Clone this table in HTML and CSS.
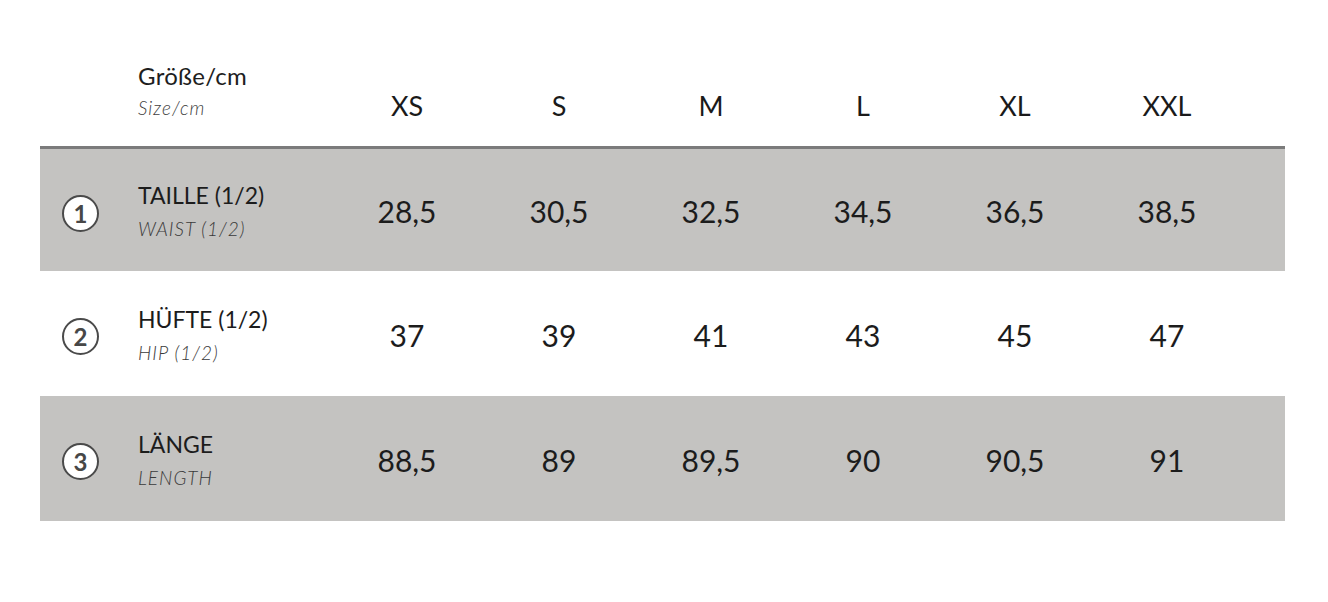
FILE: index.html
```html
<!DOCTYPE html>
<html lang="de">
<head>
<meta charset="utf-8">
<title>Größentabelle</title>
<link rel="stylesheet" href="styles.css">
</head>
<body>
<div class="chart">
  <div class="row head">
    <div class="icon-cell"></div>
    <div class="label">
      <div class="de">Größe/cm</div>
      <div class="en">Size/cm</div>
    </div>
    <div class="size">XS</div>
    <div class="size">S</div>
    <div class="size">M</div>
    <div class="size">L</div>
    <div class="size">XL</div>
    <div class="size">XXL</div>
  </div>
  <div class="row data shaded first">
    <div class="icon-cell"><span class="num">1</span></div>
    <div class="label">
      <div class="de">TAILLE (1/2)</div>
      <div class="en">WAIST (1/2)</div>
    </div>
    <div class="val">28,5</div>
    <div class="val">30,5</div>
    <div class="val">32,5</div>
    <div class="val">34,5</div>
    <div class="val">36,5</div>
    <div class="val">38,5</div>
  </div>
  <div class="row data">
    <div class="icon-cell"><span class="num">2</span></div>
    <div class="label">
      <div class="de">HÜFTE (1/2)</div>
      <div class="en">HIP (1/2)</div>
    </div>
    <div class="val">37</div>
    <div class="val">39</div>
    <div class="val">41</div>
    <div class="val">43</div>
    <div class="val">45</div>
    <div class="val">47</div>
  </div>
  <div class="row data shaded">
    <div class="icon-cell"><span class="num">3</span></div>
    <div class="label">
      <div class="de">LÄNGE</div>
      <div class="en">LENGTH</div>
    </div>
    <div class="val">88,5</div>
    <div class="val">89</div>
    <div class="val">89,5</div>
    <div class="val">90</div>
    <div class="val">90,5</div>
    <div class="val">91</div>
  </div>
</div>
</body>
</html>
```

FILE: styles.css
```css
html, body {
  margin: 0;
  padding: 0;
  background: #ffffff;
}

body {
  font-family: "Lato", "Noto Sans", "Liberation Sans", sans-serif;
  color: #1c1c1c;
}

.chart {
  width: 1245px;
  margin-left: 40px;
}

.row {
  display: grid;
  grid-template-columns: 98px 193px repeat(6, 152px) 42px;
  box-sizing: border-box;
}

.head {
  height: 146px;
  padding-top: 60px;
}

.head .label {
  align-self: start;
}

.head .de {
  font-size: 24px;
  line-height: 32px;
  letter-spacing: 0.3px;
  color: #1e1e1e;
}

.head .en {
  font-size: 19px;
  line-height: 32px;
  letter-spacing: 1px;
  font-style: italic;
  font-weight: 300;
  color: #3f3f3f;
}

.size {
  align-self: end;
  margin-bottom: 24px;
  text-align: center;
  font-size: 27px;
  line-height: 32px;
  color: #1a1a1a;
}

.data {
  height: 125px;
  align-items: center;
}

.shaded {
  background: #c4c3c1;
}

.first {
  border-top: 3px solid #7b7b7b;
}

.icon-cell {
  display: flex;
  padding-left: 22px;
}

.num {
  width: 37px;
  height: 37px;
  box-sizing: border-box;
  margin-top: 6px;
  border: 2px solid #4a4a4a;
  border-radius: 50%;
  background: #fff;
  display: flex;
  align-items: center;
  justify-content: center;
  font-size: 24px;
  font-weight: 700;
  color: #474747;
}

.data .label {
  padding-top: 4px;
}

.data .de {
  font-size: 23px;
  line-height: 34px;
  color: #1c1c1c;
}

.data .en {
  font-size: 19px;
  line-height: 34px;
  letter-spacing: 1px;
  font-style: italic;
  font-weight: 300;
  color: #3a3a3a;
}

.val {
  text-align: center;
  font-size: 30px;
  line-height: 34px;
  color: #1c1c1c;
  padding-top: 2px;
}
```
